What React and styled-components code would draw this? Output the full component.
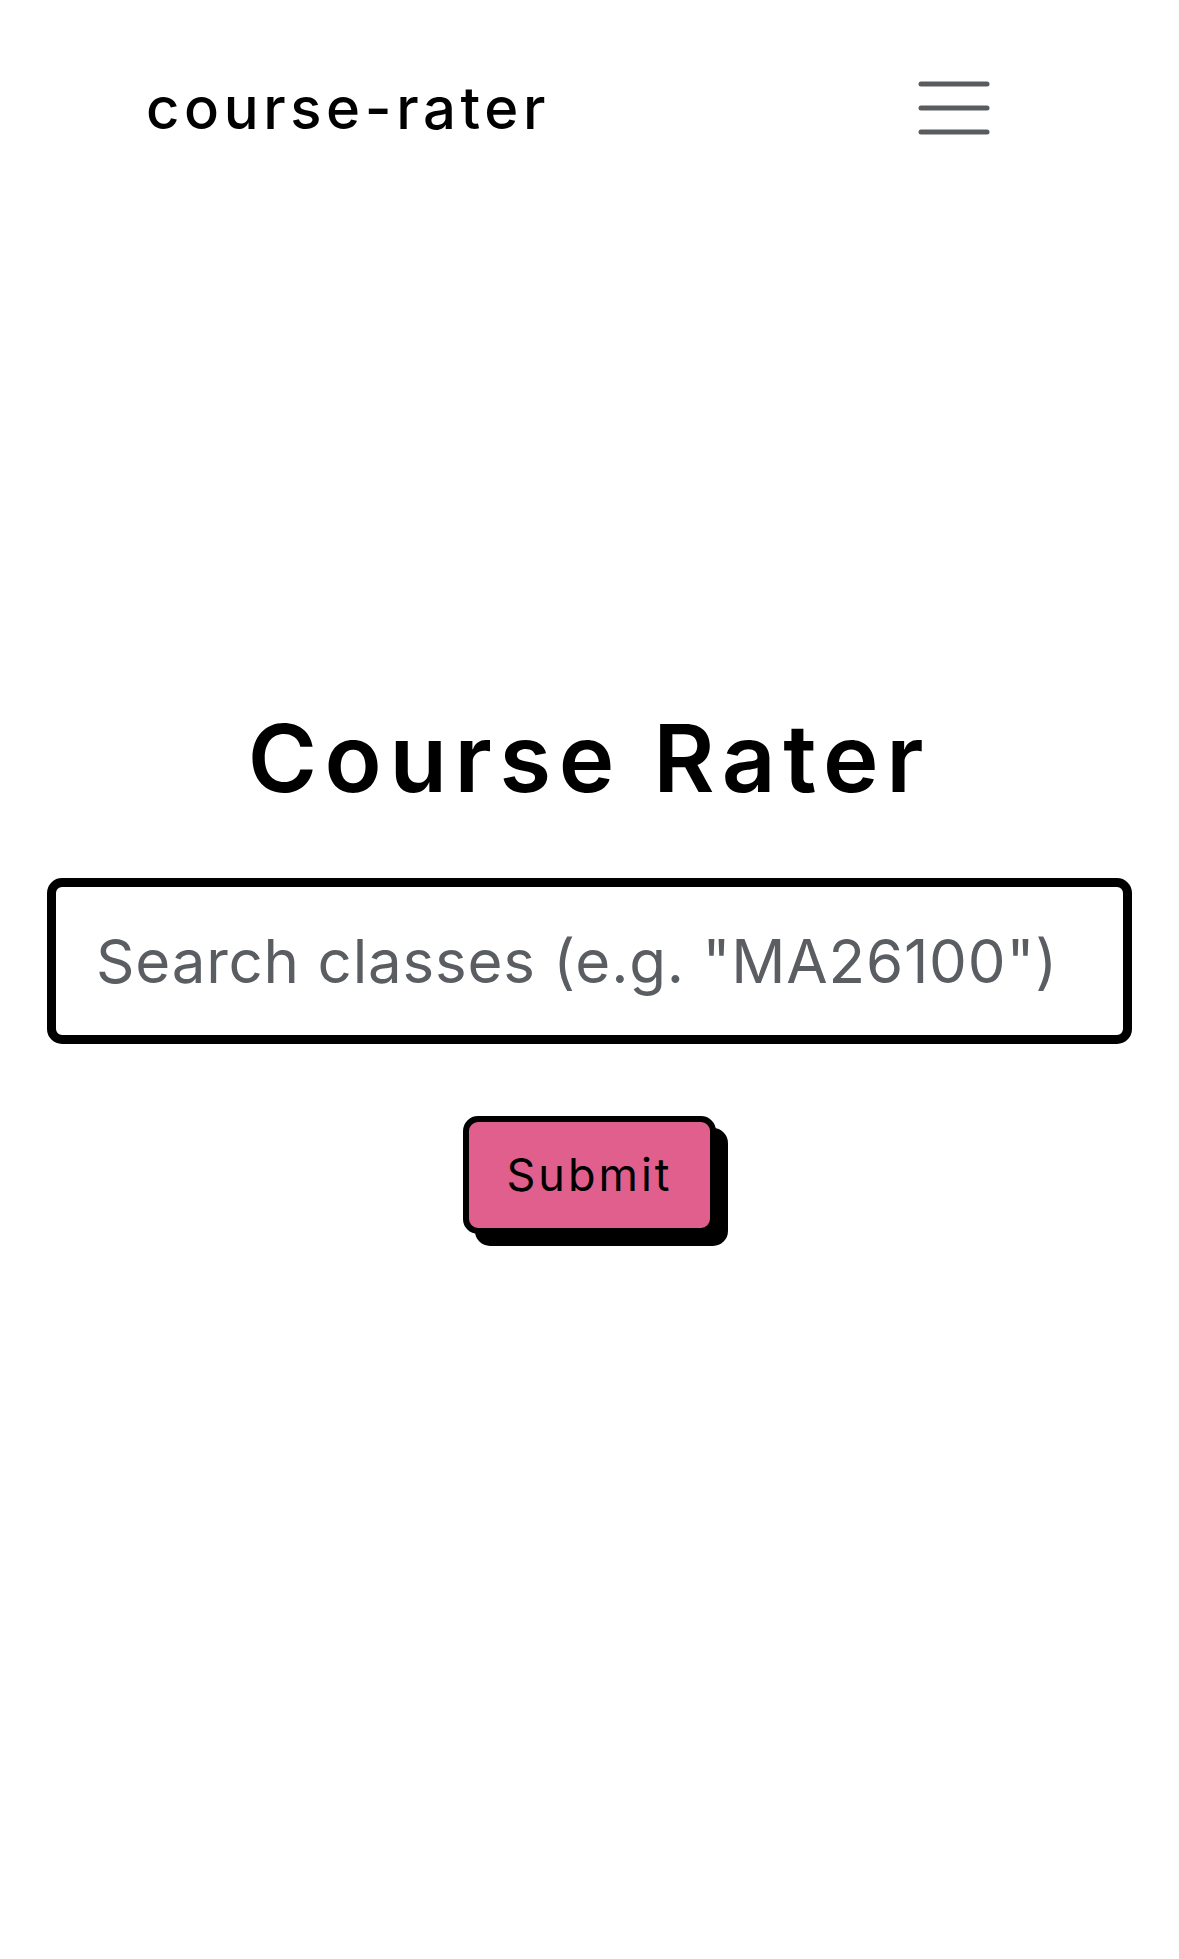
import React from "react";
import styled, { createGlobalStyle } from "styled-components";

const GlobalStyle = createGlobalStyle`
  html, body {
    margin: 0;
    padding: 0;
    background: #ffffff;
  }
  body {
    font-family: Inter, "Liberation Sans", sans-serif;
    color: #000;
  }
`;

const Page = styled.div`
  min-height: 1959px;
  display: flex;
  flex-direction: column;
`;

const Navbar = styled.nav`
  display: flex;
  align-items: center;
  justify-content: space-between;
  height: 120px;
  margin-top: 48px;
  padding: 0 189px 0 146px;
`;

const Brand = styled.a`
  font-family: Inter, sans-serif;
  font-size: 58px;
  font-weight: 500;
  letter-spacing: 4.6px;
  color: #000;
  text-decoration: none;
`;

const Toggler = styled.button`
  display: flex;
  align-items: center;
  justify-content: center;
  width: 72px;
  height: 72px;
  padding: 0;
  border: none;
  background: transparent;
  cursor: pointer;
`;

const Main = styled.main`
  display: flex;
  flex-direction: column;
  align-items: center;
  padding: 0 47px;
  margin-top: 534px;
`;

const Title = styled.h1`
  margin: 0;
  font-family: Inter, sans-serif;
  font-size: 94px;
  font-weight: 600;
  letter-spacing: 7.6px;
  line-height: 1.2;
`;

const SearchForm = styled.form`
  display: flex;
  flex-direction: column;
  align-items: center;
  width: 100%;
  margin-top: 63px;
  gap: 72px;
`;

const SearchInput = styled.input`
  box-sizing: border-box;
  width: 100%;
  height: 166px;
  padding: 0 30px 0 40px;
  border: 9px solid #000;
  border-radius: 15px;
  font-family: Inter, sans-serif;
  font-size: 60px;
  font-weight: 400;
  letter-spacing: 0.8px;
  color: #212529;
  outline: none;

  &::placeholder {
    color: #5a5e62;
  }
`;

const SubmitButton = styled.button`
  box-sizing: border-box;
  width: 253px;
  height: 118px;
  padding: 0;
  border: 6px solid #000;
  border-radius: 15px;
  background: #e15f8d;
  box-shadow: 12px 12px 0 #000;
  font-family: Inter, sans-serif;
  font-size: 45px;
  font-weight: 400;
  letter-spacing: 3px;
  color: #000;
  cursor: pointer;
`;

function HamburgerIcon() {
  return (
    <svg width="72" height="72" viewBox="0 0 72 72">
      <g stroke="#595c5f" strokeWidth="5" strokeLinecap="round">
        <line x1="3" y1="12" x2="69" y2="12" />
        <line x1="3" y1="36" x2="69" y2="36" />
        <line x1="3" y1="60" x2="69" y2="60" />
      </g>
    </svg>
  );
}

export default function App() {
  return (
    <>
      <GlobalStyle />
      <Page>
        <Navbar>
          <Brand href="#">course-rater</Brand>
          <Toggler aria-label="Toggle navigation">
            <HamburgerIcon />
          </Toggler>
        </Navbar>
        <Main>
          <Title>Course Rater</Title>
          <SearchForm onSubmit={(e) => e.preventDefault()}>
            <SearchInput placeholder={'Search classes (e.g. "MA26100")'} />
            <SubmitButton type="submit">Submit</SubmitButton>
          </SearchForm>
        </Main>
      </Page>
    </>
  );
}
